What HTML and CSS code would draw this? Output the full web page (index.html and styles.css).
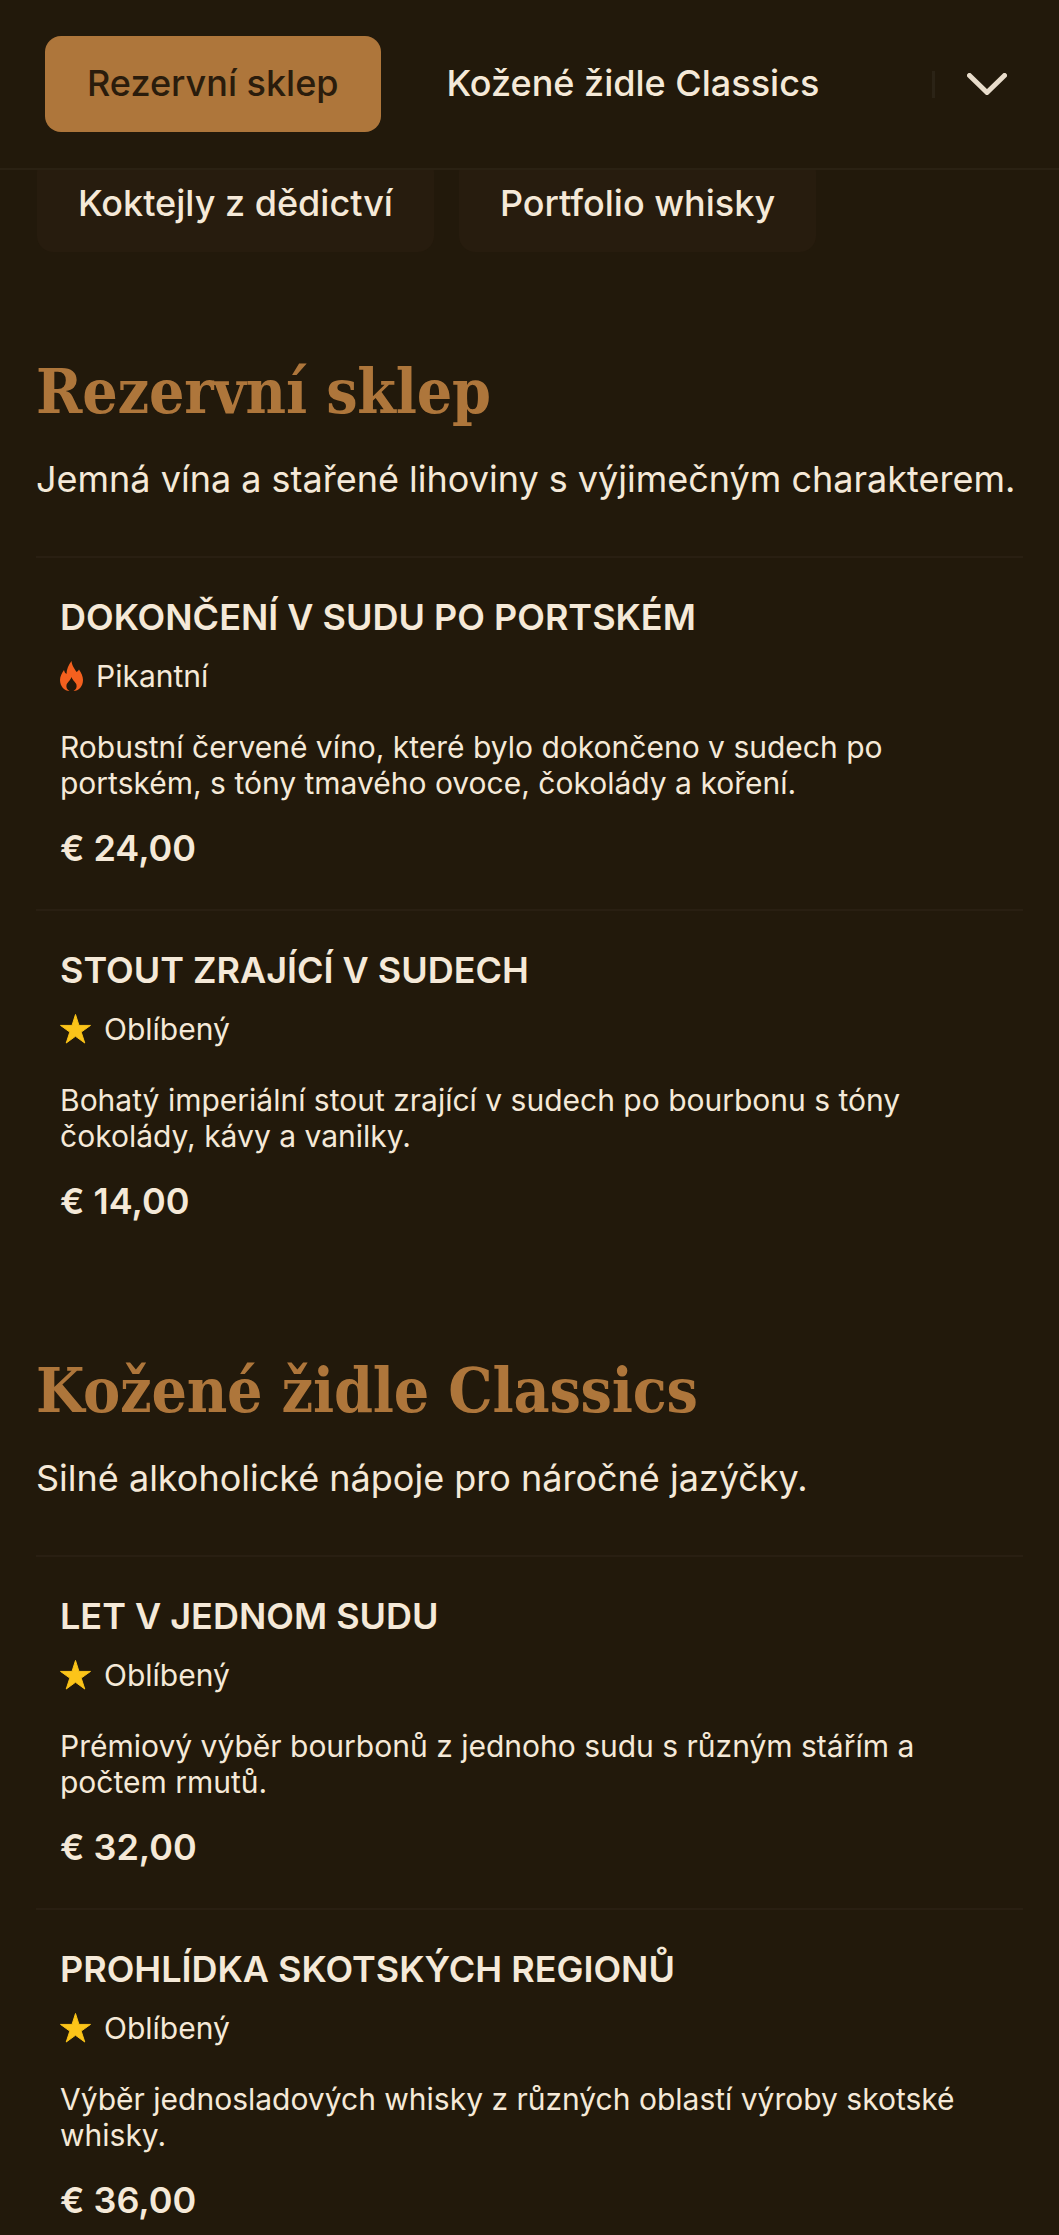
FILE: index.html
```html
<!DOCTYPE html>
<html>
<head>
    <link rel="stylesheet" href="styles.css">
</head>
<body>
    <header class="top-nav">
        <a class="nav-item active">Rezervní sklep</a>
        <a class="nav-item">Kožené židle Classics</a>
        <span class="nav-sep"></span>
        <svg class="nav-chevron" viewBox="0 0 40 22" width="40" height="22"><path d="M2.5 2.5 L20 19.5 L37.5 2.5" fill="none" stroke="#e8dccb" stroke-width="5" stroke-linecap="round" stroke-linejoin="round"/></svg>
    </header>
    <nav class="more-nav">
        <a class="nav-item pill">Koktejly z dědictví</a>
        <a class="nav-item pill">Portfolio whisky</a>
    </nav>

    <section class="menu-section">
        <h2>Rezervní sklep</h2>
        <p class="section-sub">Jemná vína a stařené lihoviny s výjimečným charakterem.</p>

        <div class="menu-item">
            <h3>Dokončení v sudu po portském</h3>
            <div class="tag">
                <svg viewBox="0 0 23 30" width="23" height="30"><path fill="#f4601e" d="M11.5 0C12 5 14.500 7.500 16.500 11C17.500 10.500 18.500 9.500 19 8.500C21.500 12 23 15.500 23 19C23 25.500 18.500 30 13.500 30C16 28.500 17 26.500 16.500 24C16 21.500 13 20 11.500 16C10 20 7 21.500 6.500 24C6 26.500 7 28.500 9.500 30C4.500 30 0 25.500 0 19C0 15 2 12 4 9C4.500 11 5 12 6.500 13C6.500 8 8.500 4 11.500 0Z"/></svg>
                Pikantní
            </div>
            <p class="desc">Robustní červené víno, které bylo dokončeno v sudech po portském, s tóny tmavého ovoce, čokolády a koření.</p>
            <div class="price">€ 24,00</div>
        </div>

        <div class="menu-item">
            <h3>Stout zrající v sudech</h3>
            <div class="tag">
                <svg viewBox="-.5 -.5 32 31" width="31" height="30"><path fill="#fcc419" stroke="#fcc419" stroke-linejoin="round" d="M15.500 0L19.100 11.300L31 11.300L21.400 18.200L25.100 29.500L15.500 22.500L5.900 29.500L9.600 18.200L0 11.300L11.900 11.300Z"/></svg>
                Oblíbený
            </div>
            <p class="desc">Bohatý imperiální stout zrající v sudech po bourbonu s tóny čokolády, kávy a vanilky.</p>
            <div class="price">€ 14,00</div>
        </div>
    </section>

    <section class="menu-section">
        <h2>Kožené židle Classics</h2>
        <p class="section-sub">Silné alkoholické nápoje pro náročné jazýčky.</p>

        <div class="menu-item">
            <h3>Let v jednom sudu</h3>
            <div class="tag">
                <svg viewBox="-.5 -.5 32 31" width="31" height="30"><path fill="#fcc419" stroke="#fcc419" stroke-linejoin="round" d="M15.500 0L19.100 11.300L31 11.300L21.400 18.200L25.100 29.500L15.500 22.500L5.900 29.500L9.600 18.200L0 11.300L11.900 11.300Z"/></svg>
                Oblíbený
            </div>
            <p class="desc">Prémiový výběr bourbonů z jednoho sudu s různým stářím a počtem rmutů.</p>
            <div class="price">€ 32,00</div>
        </div>

        <div class="menu-item">
            <h3>Prohlídka skotských regionů</h3>
            <div class="tag">
                <svg viewBox="-.5 -.5 32 31" width="31" height="30"><path fill="#fcc419" stroke="#fcc419" stroke-linejoin="round" d="M15.500 0L19.100 11.300L31 11.300L21.400 18.200L25.100 29.500L15.500 22.500L5.900 29.500L9.600 18.200L0 11.300L11.900 11.300Z"/></svg>
                Oblíbený
            </div>
            <p class="desc">Výběr jednosladových whisky z různých oblastí výroby skotské whisky.</p>
            <div class="price">€ 36,00</div>
        </div>
    </section>
</body>
</html>
```

FILE: styles.css
```css
html, body {
    height: 2235px;
    overflow: hidden;
}
body {
    margin: 0;
    background-color: #22190b;
    color: #f5e9d8;
    font-family: Inter, "Noto Sans", sans-serif;
}
.top-nav {
    position: relative;
    z-index: 2;
    display: flex;
    align-items: center;
    gap: 24px;
    height: 170px;
    box-sizing: border-box;
    padding: 0 52px 0 45px;
    background-color: #22190b;
    border-bottom: 2px solid #2a2113;
}
.nav-item {
    display: block;
    height: 96px;
    line-height: 94px;
    padding: 0 42px;
    font-size: 36px;
    font-weight: 500;
    white-space: nowrap;
}
.active {
    background-color: #ae763b;
    color: #2a1c0c;
    border-radius: 16px;
}
.nav-sep {
    width: 3px;
    height: 27px;
    margin-left: auto;
    background-color: #2b2316;
}
.nav-chevron {
    margin-left: 8px;
}
.more-nav {
    display: flex;
    gap: 25px;
    margin-top: -14px;
    margin-bottom: 100px;
    padding: 0 37px;
}
.pill {
    padding: 0 41px;
    background-color: #271c0e;
    border-radius: 16px;
}
.menu-section {
    padding: 0 36px;
    margin-top: 89px;
}
.menu-section h2 {
    margin: 0;
    font-family: "DejaVu Serif", serif;
    font-stretch: condensed;
    font-size: 62px;
    line-height: 80px;
    font-weight: 700;
    letter-spacing: -0.2px;
    color: #ae763b;
}
.section-sub {
    margin: 25px 0 0;
    font-size: 36px;
    line-height: 44px;
}
.section-sub + .menu-item {
    margin-top: 55px;
}
.menu-item {
    height: 353px;
    box-sizing: border-box;
    padding: 37px 24px 0;
    border-top: 2px solid #291f12;
}
.menu-item h3 {
    margin: 0;
    font-size: 36px;
    line-height: 44px;
    font-weight: 600;
    text-transform: uppercase;
}
.tag {
    display: flex;
    align-items: center;
    gap: 13px;
    margin-top: 15px;
    font-size: 30px;
    line-height: 44px;
}
.desc {
    margin: 31px 0 0;
    font-size: 30px;
    line-height: 36px;
}
.price {
    margin-top: 25px;
    font-size: 36px;
    line-height: 44px;
    font-weight: 600;
}
```
